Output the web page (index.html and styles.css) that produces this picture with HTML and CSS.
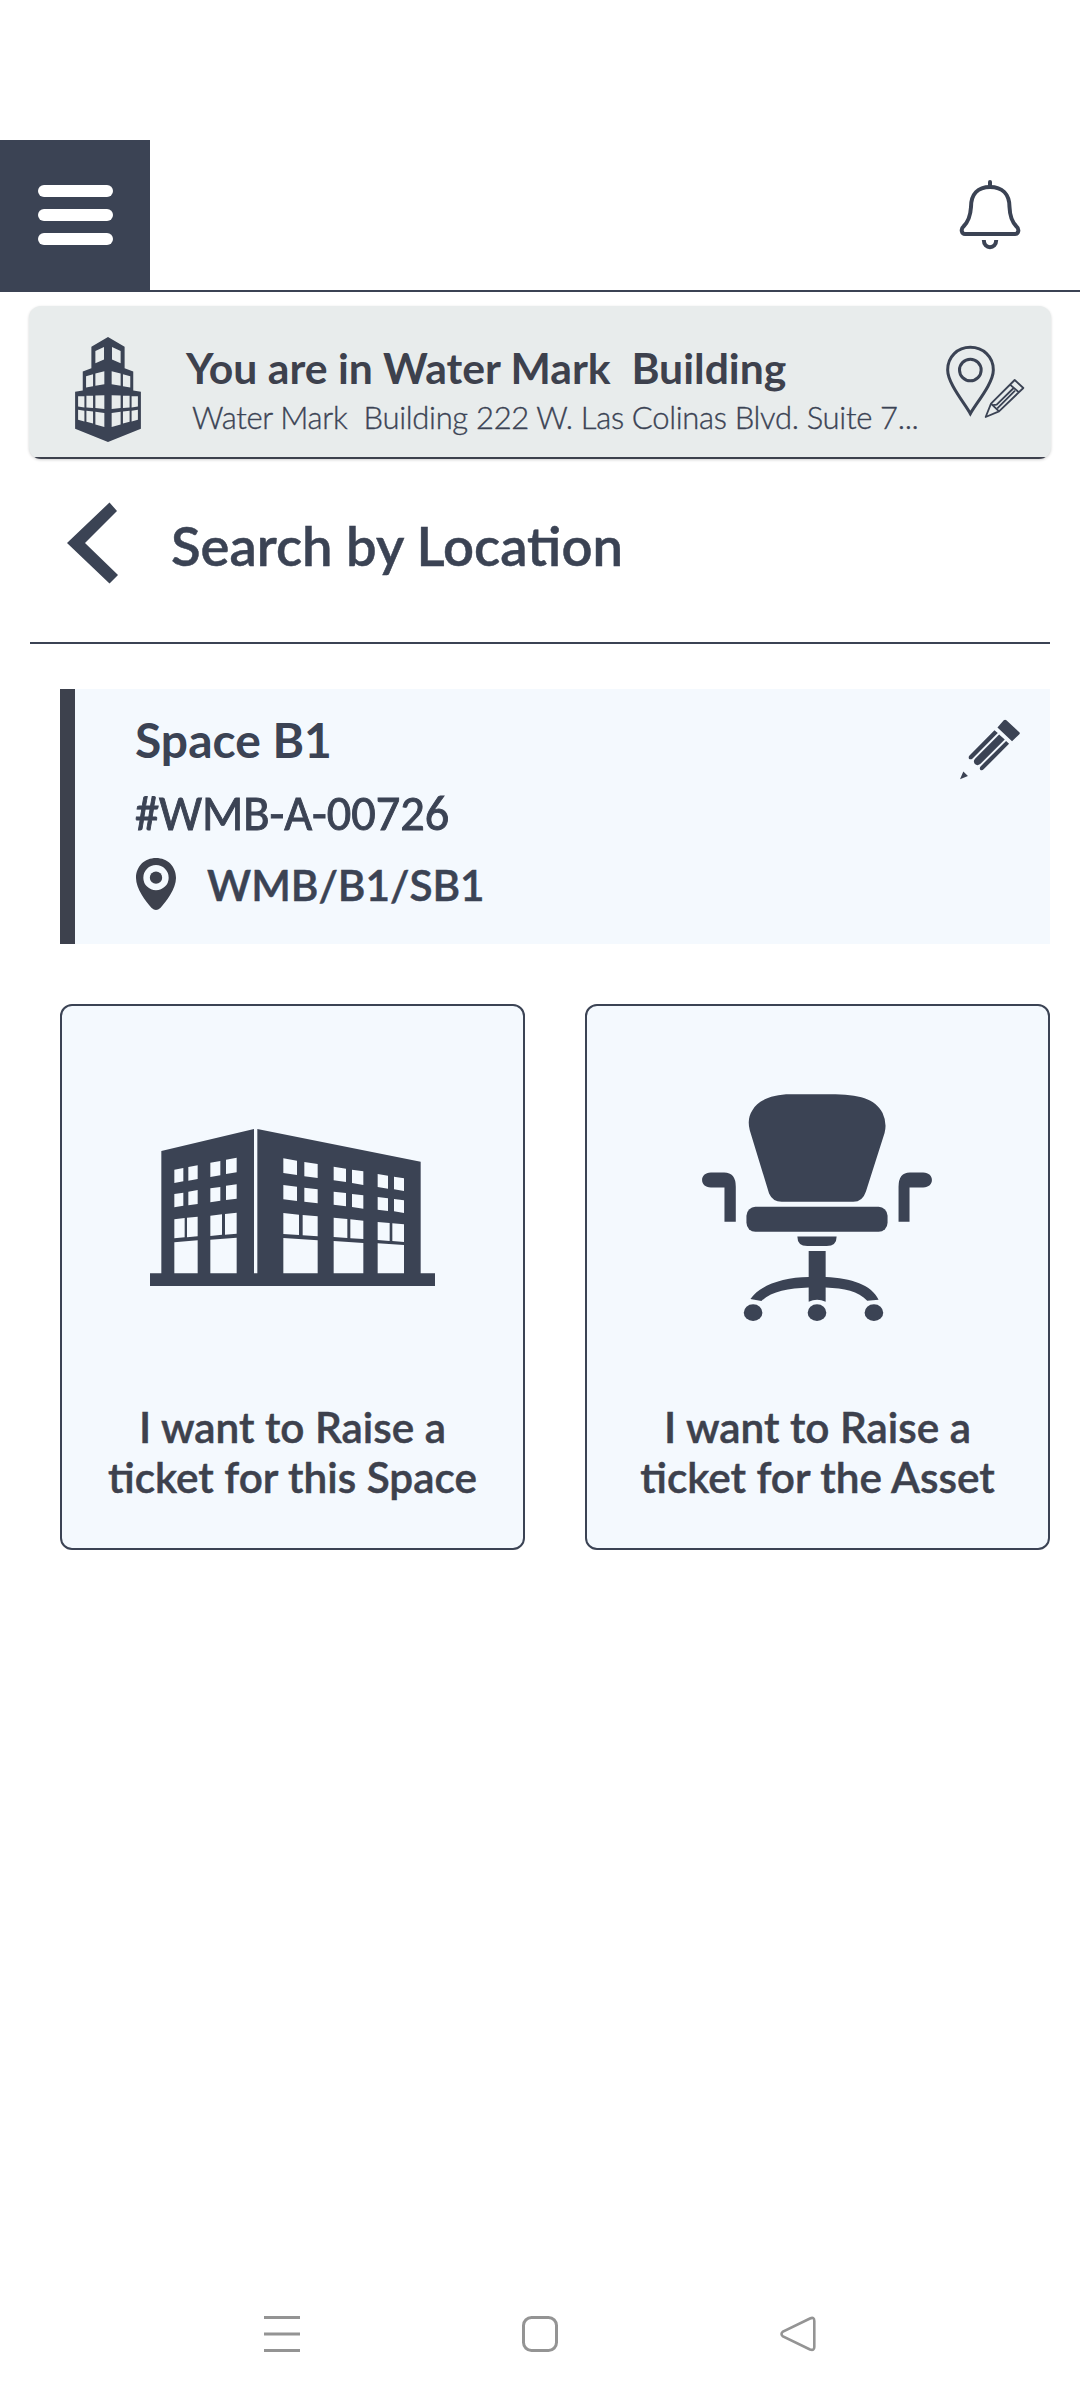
FILE: index.html
```html
<!DOCTYPE html>
<html lang="en">
<head>
<meta charset="utf-8">
<title>Search by Location</title>
<link rel="stylesheet" href="styles.css">
</head>
<body>
<header class="topbar">
  <button class="menu" aria-label="Menu"><span></span><span></span><span></span></button>
  <svg class="bell" viewBox="956 178 68 74" fill="none" stroke="#3b4354" stroke-width="4">
    <path d="M990 182V187" stroke-linecap="round"/>
    <path d="M965 234H1015C1018.700 234 1019.500 229 1016.500 226.500C1011 221 1009.800 215 1009.500 207C1009.500 194 1002 187 990 187C978 187 971 194 971 207C970.500 215 969 221 963.500 226.500C960.500 229 961.500 234 965 234Z"/>
    <path d="M983.800 240C983.800 249.500 996.200 249.500 996.200 240"/>
  </svg>
</header>

<main>
  <section class="banner">
    <svg class="tower" viewBox="45 50 198 316">
      <path fill="#3b4354" d="M144 50L194 79V144L220 154V211L243 215V326L144 366L45 326V215L68 211V154L94 144V79Z"/>
      <path fill="#e8ecec" d="M106 92L132 80V118L106 129ZM156 80L182 92V129L156 118ZM78 168L99 162V198L78 202ZM106 160L133 153V192L106 197ZM155 153L182 160V197L155 192ZM189 162L211 168V202L189 198ZM54 228H73V262L54 259ZM79 227H99V264L79 262ZM106 226L133 225V267L106 264ZM155 225L182 226V264L155 267ZM189 227H209V262L189 264ZM215 228H234V259L215 262ZM54 269L73 272V304L54 299ZM79 272L99 274V310L79 305ZM106 275L133 279V321L106 313ZM155 279L182 275V313L155 321ZM189 274L209 272V305L189 310ZM215 272L234 269V299L215 304Z"/>
    </svg>
    <div class="banner-text">
      <h2>You are in Water Mark  Building</h2>
      <p>Water Mark  Building 222 W. Las Colinas Blvd. Suite 7...</p>
    </div>
    <svg class="pin-edit" viewBox="45 45 240 222" fill="none" stroke="#3b4354">
      <path stroke-width="9" d="M121 251C104 220 53 160 53 120C53 80 83 52 121 52S190 80 190 120C190 160 138 220 121 251Z"/>
      <circle cx="121" cy="120" r="32.500" stroke-width="9"/>
      <path stroke-width="5.500" stroke-linejoin="round" d="M167 261L183 221L254 150L280 174L207 244ZM183 221L207 244M240 164L267 187M190 225L200 224L251 174M202 235L255 182"/>
    </svg>
  </section>

  <div class="heading">
    <svg class="back" viewBox="0 0 52 82"><path fill="#3b4354" d="M42.500 0.500L50 9L18 41L51 73L42.500 81.500L0 41Z"/></svg>
    <h1>Search by Location</h1>
  </div>

  <section class="space">
    <div class="space-info">
      <h3>Space B1</h3>
      <p class="code">#WMB-A-00726</p>
      <p class="path">
        <svg class="pin" viewBox="0 0 120 156"><path fill="#3d414d" fill-rule="evenodd" d="M60 0C94 0 120 25 120 60C120 92 91 130 73 150Q60 162 47 150C29 130 0 92 0 60C0 25 26 0 60 0ZM60 21A38 38 0 1 0 60 97A38 38 0 1 0 60 21Z"/><circle cx="60" cy="59" r="18.500" fill="#3d414d"/></svg>
        WMB/B1/SB1
      </p>
    </div>
    <svg class="pencil" viewBox="180 146 181 182" fill="#3b4354">
      <path d="M312 149Q316 145 320 149L359 185Q362 188 359 191L337 212L293 171Z"/>
      <path d="M284 179L294 187L218 264Q212 269 207 265Q205 260 208 256ZM298 192L315 207L241 281Q232 288 225 281Q218 272 226 264ZM319 211L328 220L252 296Q246 302 241 298Q238 293 242 288ZM190 303L204 317L180 327Z"/>
    </svg>
  </section>

  <div class="cards">
    <a class="card">
      <svg class="building" viewBox="60 87 855 471">
        <path fill="#3b4354" d="M60 520H94V153L372 87V520H382V87L872 185V520H915V558H60Z"/>
        <path fill="#f4f9fe" d="M133 209L160 204V244L133 249ZM175 201L203 196V237L175 242ZM241 188L271 183V226L241 231ZM288 179L320 173V217L288 222ZM133 282L160 278V317L133 322ZM175 275L203 270V312L175 316ZM241 265L271 261V302L241 307ZM288 257L320 253V296L288 300ZM133 358L164 354V412L133 415ZM171 353L203 350V409L171 412ZM241 347L276 343V404L241 408ZM285 342L320 338V401L285 404ZM133 427L203 421V520H133ZM241 419L320 413V520H241ZM460 175L501 182V225L460 219ZM523 186L563 192V234L523 229ZM460 255L501 260V303L460 298ZM523 263L563 268V310L523 305ZM460 339L507 344V405L460 402ZM518 345L563 349V409L518 406ZM460 414L563 421V520H460ZM611 200L648 206V246L611 241ZM666 209L700 214V255L666 249ZM611 275L648 279V319L611 314ZM666 282L700 286V326L666 321ZM611 353L652 357V414L611 411ZM661 358L700 362V417L661 415ZM611 423L700 429V520H611ZM743 222L774 227V266L743 261ZM792 230L822 235V273L792 268ZM743 291L774 295V333L743 329ZM792 297L822 301V339L792 334ZM743 366L779 369V423L743 420ZM787 370L822 373V426L787 423ZM743 430L822 435V520H743Z"/>
      </svg>
      <span class="label">I want to Raise a<br>ticket for this Space</span>
    </a>
    <a class="card">
      <svg class="chair" viewBox="66 71 690 682" fill="#3b4354">
        <path d="M330 72H450C540 72 585 86 608 128Q622 158 614 188L558 364Q548 395 520 395H305Q278 395 267 370L209 180Q200 145 217 120C235 88 280 72 330 72Z"/>
        <rect x="199" y="410" width="424" height="75" rx="27"/>
        <path d="M92 307H132Q167 307 167 350V455H133V352H92C57 352 57 307 92 307ZM730 307H690Q656 307 656 350V455H689V352H730C765 352 765 307 730 307Z"/>
        <path d="M352 499H470Q470 528 440 528H382Q352 528 352 499ZM386 543H437V621C515 624 575 645 596 689L562 692C535 662 493 655 437 652V695Q411 684 386 695V652C325 655 275 662 244 693L211 687C240 645 310 622 386 621Z"/>
        <ellipse cx="219" cy="728" rx="28" ry="25"/><ellipse cx="411" cy="728" rx="28" ry="25"/><ellipse cx="582" cy="728" rx="28" ry="25"/>
      </svg>
      <span class="label">I want to Raise a<br>ticket for the Asset</span>
    </a>
  </div>
</main>

<nav class="sysnav">
  <svg viewBox="0 0 36 36" fill="none" stroke="#949494" stroke-width="3"><path d="M0 1.500H36M0 18H36M0 34.500H36"/></svg>
  <svg viewBox="0 0 36 36" fill="none" stroke="#949494" stroke-width="3"><rect x="1.500" y="1.500" width="33" height="33" rx="8"/></svg>
  <svg viewBox="0 0 36 36" fill="none" stroke="#949494" stroke-width="2.600"><path d="M30 2.500Q34.300 0.500 34.300 5V31Q34.300 35 30 33.500L3 20.500Q0 18 3 15.500Z"/></svg>
</nav>
</body>
</html>
```
FILE: styles.css
```css
* { box-sizing: border-box; }
body {
  margin: 0;
  width: 1080px;
  height: 2400px;
  padding-top: 140px;
  display: flex;
  flex-direction: column;
  background: #fff;
  color: #3b4354;
  font-family: Lato, Carlito, sans-serif;
}
h1, h2, h3, p { margin: 0; }
svg { display: block; flex: none; }

.topbar {
  height: 152px;
  border-bottom: 2px solid #3b4354;
  display: flex;
  justify-content: space-between;
}
.menu {
  width: 150px;
  height: 150px;
  padding: 0;
  border: 0;
  background: #3b4354;
  display: flex;
  flex-direction: column;
  align-items: center;
  justify-content: center;
  gap: 12px;
}
.menu span { width: 75px; height: 12px; border-radius: 6px; background: #fff; }
.bell { width: 68px; height: 74px; margin: 38px 56px 0 0; }

main { flex: 1; }
.banner {
  margin: 14px 29px 0;
  height: 153px;
  border-radius: 12px;
  background: linear-gradient(#3d414d, #3d414d) bottom / 100% 2px no-repeat #e8ecec;
  box-shadow: 0 1px 3px rgba(0, 0, 0, .18);
  display: flex;
  padding: 0 25px 0 46px;
}
.tower { width: 66px; height: 105px; margin-top: 31px; }
.banner-text { margin: 37px 0 0 45px; width: 759px; color: #3d414d; }
.banner h2 { font-size: 42.7px; line-height: 50px; font-weight: 700; white-space: pre; }
.banner p {
  margin: 4px 0 0 6px;
  font-size: 31px;
  line-height: 40px;
  font-weight: 300;
  letter-spacing: -.32px;
  color: #3b4354;
  white-space: pre;
  -webkit-text-stroke: .35px;
}
.pin-edit { width: 80px; height: 74px; margin-top: 39px; }

.heading {
  margin: 0 30px;
  height: 185px;
  border-bottom: 2px solid #3b4354;
  display: flex;
}
.back { width: 52px; height: 82px; margin: 43px 0 0 37px; }
h1 {
  margin: 53px 0 0 52px;
  font-size: 54.4px;
  line-height: 66px;
  font-weight: 600;
  -webkit-text-stroke: .5px;
}

.space {
  margin: 45px 30px 0 60px;
  height: 255px;
  border-left: 15px solid #3d414d;
  background: #f4f9fe;
  display: flex;
  justify-content: space-between;
  padding: 0 30px 0 60px;
}
.space-info { padding-top: 22px; }
.space h3 { font-size: 48px; line-height: 58px; }
.code {
  margin-top: 17px;
  font-family: Carlito, Lato, sans-serif;
  font-size: 48.3px;
  line-height: 56px;
  font-weight: 400;
  -webkit-text-stroke: .9px;
}
.path {
  margin-top: 16px;
  font-size: 42.3px;
  line-height: 54px;
  font-weight: 600;
  -webkit-text-stroke: .5px;
  display: flex;
}
.pin { width: 40px; height: 52px; margin: 0 31px 0 1px; }
.pencil { width: 60px; height: 61px; margin-top: 30px; }

.cards {
  margin: 60px 30px 0 60px;
  display: grid;
  grid-template-columns: 1fr 1fr;
  gap: 60px;
}
.card {
  height: 546px;
  border: 2px solid #3b4354;
  border-radius: 12px;
  background: #f4f9fe;
  display: flex;
  flex-direction: column;
  align-items: center;
  justify-content: space-between;
  padding-bottom: 46px;
}
.building { width: 285px; height: 157px; margin-top: 123px; }
.chair { width: 230px; height: 227px; margin: 88px 1px 0 0; }
.label {
  font-size: 42.3px;
  line-height: 50px;
  font-weight: 600;
  text-align: center;
  color: #3d414d;
  -webkit-text-stroke: .5px;
}

.sysnav {
  height: 84px;
  display: flex;
  justify-content: space-between;
  padding: 0 264px;
}
.sysnav svg { width: 36px; height: 36px; }
```
